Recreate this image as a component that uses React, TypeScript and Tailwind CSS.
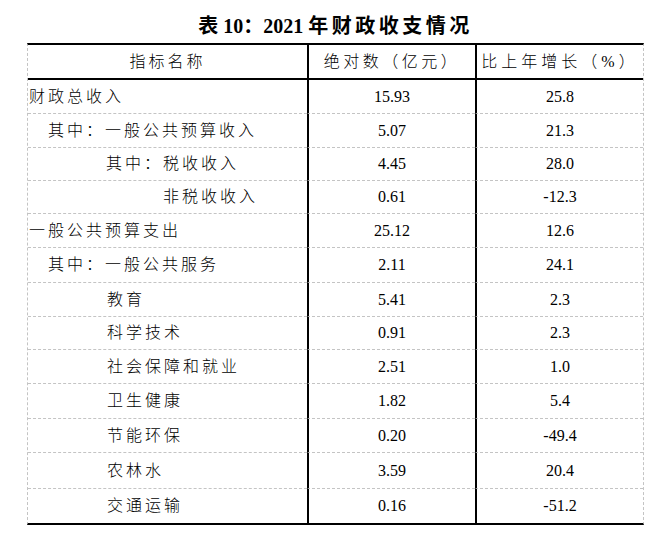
import React from 'react';

type Row = {
  label: string;
  indent: string;
  value: string;
  growth: string;
  height: string;
};

const rows: Row[] = [
  { label: '财政总收入', indent: 'pl-[1px]', value: '15.93', growth: '25.8', height: 'h-[34px]' },
  { label: '其中：一般公共预算收入', indent: 'pl-[20px]', value: '5.07', growth: '21.3', height: 'h-[34px]' },
  { label: '其中：税收收入', indent: 'pl-[78px]', value: '4.45', growth: '28.0', height: 'h-[33px]' },
  { label: '非税收收入', indent: 'pl-[135px]', value: '0.61', growth: '-12.3', height: 'h-[33px]' },
  { label: '一般公共预算支出', indent: 'pl-[1px]', value: '25.12', growth: '12.6', height: 'h-[34px]' },
  { label: '其中：一般公共服务', indent: 'pl-[20px]', value: '2.11', growth: '24.1', height: 'h-[35px]' },
  { label: '教育', indent: 'pl-[79px]', value: '5.41', growth: '2.3', height: 'h-[34px]' },
  { label: '科学技术', indent: 'pl-[79px]', value: '0.91', growth: '2.3', height: 'h-[33px]' },
  { label: '社会保障和就业', indent: 'pl-[79px]', value: '2.51', growth: '1.0', height: 'h-[34px]' },
  { label: '卫生健康', indent: 'pl-[79px]', value: '1.82', growth: '5.4', height: 'h-[35px]' },
  { label: '节能环保', indent: 'pl-[79px]', value: '0.20', growth: '-49.4', height: 'h-[34px]' },
  { label: '农林水', indent: 'pl-[79px]', value: '3.59', growth: '20.4', height: 'h-[36px]' },
  { label: '交通运输', indent: 'pl-[79px]', value: '0.16', growth: '-51.2', height: 'h-[34px]' },
];

const font = "font-['Liberation_Serif','Noto_Sans_CJK_SC',serif]";

export default function App() {
  return (
    <div className={`w-[667px] h-[533px] bg-white text-black ${font}`}>
      {/* Title */}
      <div className="h-[43px] pt-[14px] pl-[27px]">
        <h1 className="w-[617px] text-center text-[20px] leading-[24px] font-bold">
          表 10：2021 <span className="tracking-[3.5px]">年财政收支情况</span>
        </h1>
      </div>

      {/* Table */}
      <div className="ml-[27px] w-[617px] border-x border-dashed border-[#c4c4c4] border-t-2 border-b-2 border-t-black border-b-black [border-top-style:solid] [border-bottom-style:solid]">
        {/* Header */}
        <div className="flex h-[35px] border-b-2 border-black text-[16px] font-light">
          <div className="w-[279px] flex items-center justify-center tracking-[3px]">指标名称</div>
          <div className="w-[168px] flex items-center justify-center border-l-2 border-black tracking-[3.5px]">
            绝对数（亿元）
          </div>
          <div className="w-[168px] flex items-center justify-center border-l-2 border-black tracking-[4px]">
            比上年增长（%）
          </div>
        </div>

        {rows.map((r, i) => {
          const last = i === rows.length - 1;
          const line = last ? '' : 'border-b border-dashed border-b-[#c4c4c4]';
          return (
            <div key={r.label} className={`flex ${r.height} text-[16px]`}>
              <div className={`w-[279px] flex items-center ${r.indent} tracking-[3px] font-light ${line}`}>
                {r.label}
              </div>
              <div
                className={`w-[168px] flex items-center justify-center border-l-2 border-l-black [border-left-style:solid] ${line}`}
              >
                {r.value}
              </div>
              <div
                className={`w-[168px] flex items-center justify-center border-l-2 border-l-black [border-left-style:solid] ${line}`}
              >
                {r.growth}
              </div>
            </div>
          );
        })}
      </div>
    </div>
  );
}
